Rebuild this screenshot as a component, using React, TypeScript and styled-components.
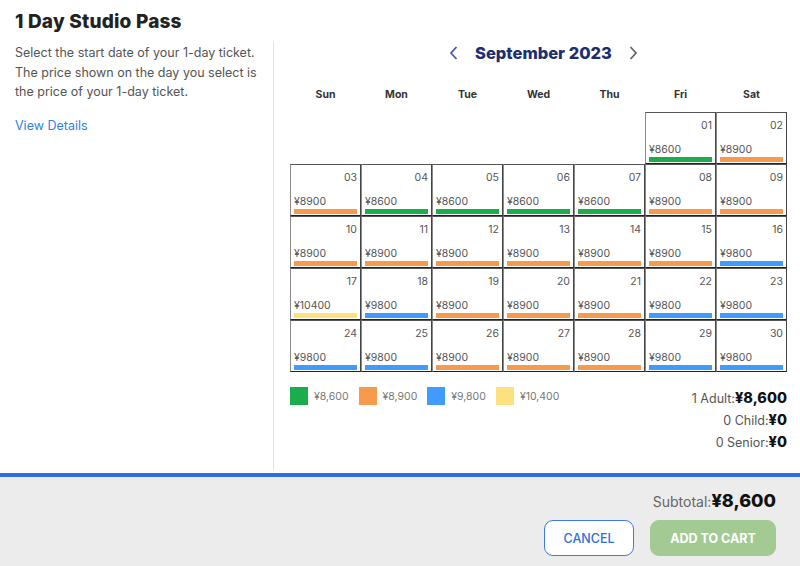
import React from "react";
import styled, { createGlobalStyle } from "styled-components";

const Global = createGlobalStyle`
  html, body { margin: 0; padding: 0; background: #fff; }
  body { font-family: Inter, "Noto Sans", sans-serif; color: #333; }
  * { box-sizing: border-box; }
`;

const Page = styled.div`
  width: 800px;
  height: 566px;
  display: flex;
  flex-direction: column;
  overflow: hidden;
`;

const Main = styled.div`
  height: 473px;
  display: flex;
  flex-direction: column;
`;

const Title = styled.h1`
  margin: 0;
  padding: 2px 0 0 15px;
  height: 42px;
  line-height: 40px;
  font-size: 19px;
  font-weight: 800;
  color: #222;
  letter-spacing: 0.2px;
`;

const Columns = styled.div`
  flex: 1;
  display: flex;
`;

const Side = styled.div`
  width: 274px;
  padding: 1px 15px 0 15px;
  border-right: 1px solid #e3e3e3;
  margin-bottom: 3px;
`;

const Desc = styled.p`
  margin: 0;
  font-size: 12.5px;
  line-height: 19.5px;
  color: #555;
`;

const Link = styled.a`
  display: block;
  margin-top: 16px;
  font-size: 12.5px;
  color: #2f7fe6;
  text-decoration: none;
`;

const Cal = styled.div`
  flex: 1;
  padding: 0 13px 0 16px;
  display: flex;
  flex-direction: column;
`;

const MonthBar = styled.div`
  height: 22px;
  display: flex;
  align-items: center;
  justify-content: center;
  gap: 14px;
  margin-left: 10px;
`;

const MonthName = styled.div`
  font-size: 16.5px;
  font-weight: 800;
  color: #1d2d72;
`;

const Chev = styled.svg<{ $color: string }>`
  width: 14px;
  height: 16px;
  stroke: ${(p) => p.$color};
  fill: none;
  stroke-width: 1.8;
`;

const Weekdays = styled.div`
  display: grid;
  grid-template-columns: repeat(7, 71px);
  margin-top: 20px;
  height: 20px;
  align-items: center;
`;

const Wd = styled.div`
  text-align: center;
  font-size: 10.5px;
  font-weight: 700;
  color: #333;
`;

const Grid = styled.div`
  margin-top: 8px;
  display: grid;
  grid-template-columns: repeat(7, 71px);
  grid-auto-rows: 52px;
`;

const Cell = styled.div`
  border-left: 1px solid #8a8a8a;
  border-top: 1px solid #555;
  border-right: 1px solid #444;
  border-bottom: 1px solid #222;
  display: flex;
  flex-direction: column;
  padding: 6px 3px 1px 3px;
`;

const Empty = styled.div``;

const DayNum = styled.div`
  text-align: right;
  font-size: 10.5px;
  line-height: 14px;
  color: #555;
`;

const Price = styled.div`
  margin-top: auto;
  font-size: 10.5px;
  line-height: 13px;
  color: #555;
`;

const Bar = styled.div<{ $c: string }>`
  height: 5px;
  margin-top: 1px;
  background: ${(p) => p.$c};
`;

const Below = styled.div`
  display: flex;
  justify-content: space-between;
  margin-top: 15px;
`;

const Legend = styled.div`
  display: flex;
  gap: 10px;
  height: 18px;
`;

const LegendItem = styled.div`
  display: flex;
  align-items: center;
  gap: 6px;
  font-size: 10.5px;
  color: #777;
`;

const Swatch = styled.span<{ $c: string }>`
  width: 18px;
  height: 18px;
  background: ${(p) => p.$c};
`;

const Totals = styled.div`
  display: flex;
  flex-direction: column;
  align-items: flex-end;
  gap: 3px;
  margin-top: 2px;
  width: 140px;
`;

const TotalRow = styled.div`
  font-size: 12.5px;
  color: #555;
  line-height: 19px;
  height: 19px;
`;

const Strong = styled.b<{ $size?: number }>`
  font-size: ${(p) => p.$size ?? 14.5}px;
  line-height: 1;
  font-weight: 800;
  color: #111;
`;

const Rule = styled.div`
  height: 4px;
  background: #2e6fdc;
`;

const Footer = styled.div`
  flex: 1;
  background: #ececec;
  display: flex;
  flex-direction: column;
  align-items: flex-end;
  padding: 13px 24px 0 0;
`;

const Subtotal = styled.div`
  font-size: 14px;
  color: #666;
  line-height: 24px;
  height: 24px;
`;

const Buttons = styled.div`
  display: flex;
  gap: 16px;
  margin-top: 6px;
`;

const Btn = styled.button<{ $primary?: boolean }>`
  height: 36px;
  border-radius: 9px;
  font-family: inherit;
  font-size: 12.5px;
  padding: 0;
  ${(p) =>
    p.$primary
      ? `width: 126px; background: #a3ca92; border: 1px solid #a3ca92; color: #fff; font-weight: 700;`
      : `width: 90px; background: #fff; border: 1px solid #3a7be0; color: #2f6fdc; font-weight: 500;`}
`;

const C = {
  g: "#1aad4b",
  o: "#f89a4c",
  b: "#3f9bfd",
  y: "#fbe17f",
};

const priceColor: Record<string, string> = {
  "8600": C.g,
  "8900": C.o,
  "9800": C.b,
  "10400": C.y,
};

const prices = [
  "8600", "8900",
  "8900", "8600", "8600", "8600", "8600", "8900", "8900",
  "8900", "8900", "8900", "8900", "8900", "8900", "9800",
  "10400", "9800", "8900", "8900", "8900", "9800", "9800",
  "9800", "9800", "8900", "8900", "8900", "9800", "9800",
];

const days = ["Sun", "Mon", "Tue", "Wed", "Thu", "Fri", "Sat"];

export default function App() {
  return (
    <Page>
      <Global />
      <Main>
        <Title>1 Day Studio Pass</Title>
        <Columns>
          <Side>
            <Desc>
              Select the start date of your 1-day ticket.
              <br />
              The price shown on the day you select is
              <br />
              the price of your 1-day ticket.
            </Desc>
            <Link href="#">View Details</Link>
          </Side>
          <Cal>
            <MonthBar>
              <Chev $color="#4a5aa0" viewBox="0 0 14 16">
                <path d="M9.5 2 L4 8 L9.5 14" />
              </Chev>
              <MonthName>September 2023</MonthName>
              <Chev $color="#666" viewBox="0 0 14 16">
                <path d="M4.5 2 L10 8 L4.5 14" />
              </Chev>
            </MonthBar>
            <Weekdays>
              {days.map((d) => (
                <Wd key={d}>{d}</Wd>
              ))}
            </Weekdays>
            <Grid>
              {Array.from({ length: 5 }).map((_, i) => (
                <Empty key={"e" + i} />
              ))}
              {prices.map((p, i) => (
                <Cell key={i}>
                  <DayNum>{String(i + 1).padStart(2, "0")}</DayNum>
                  <Price>¥{p}</Price>
                  <Bar $c={priceColor[p]} />
                </Cell>
              ))}
            </Grid>
            <Below>
              <Legend>
                <LegendItem>
                  <Swatch $c={C.g} />¥8,600
                </LegendItem>
                <LegendItem>
                  <Swatch $c={C.o} />¥8,900
                </LegendItem>
                <LegendItem>
                  <Swatch $c={C.b} />¥9,800
                </LegendItem>
                <LegendItem>
                  <Swatch $c={C.y} />¥10,400
                </LegendItem>
              </Legend>
              <Totals>
                <TotalRow>
                  1 Adult:<Strong>¥8,600</Strong>
                </TotalRow>
                <TotalRow>
                  0 Child:<Strong>¥0</Strong>
                </TotalRow>
                <TotalRow>
                  0 Senior:<Strong>¥0</Strong>
                </TotalRow>
              </Totals>
            </Below>
          </Cal>
        </Columns>
      </Main>
      <Rule />
      <Footer>
        <Subtotal>
          Subtotal:<Strong $size={18}>¥8,600</Strong>
        </Subtotal>
        <Buttons>
          <Btn>CANCEL</Btn>
          <Btn $primary>ADD TO CART</Btn>
        </Buttons>
      </Footer>
    </Page>
  );
}
